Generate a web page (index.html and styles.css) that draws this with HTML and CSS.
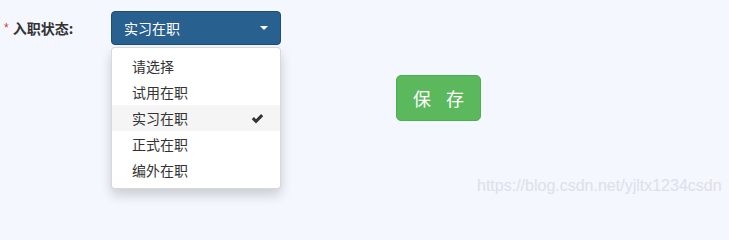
FILE: index.html
```html
<!DOCTYPE html>
<html lang="zh-CN">
<head>
<meta charset="utf-8">
<title>入职状态</title>
<link rel="stylesheet" href="styles.css">
</head>
<body>
<div class="page">
  <div class="form-row">
    <label class="field-label"><span class="req">*</span>入职状态:</label>
    <div class="select">
      <button class="select-btn" type="button">
        <span class="select-text">实习在职</span>
        <span class="caret"></span>
      </button>
      <ul class="menu">
        <li class="item">请选择</li>
        <li class="item">试用在职</li>
        <li class="item active">实习在职
          <svg class="check" viewBox="0 0 13 10" width="13" height="10"><path d="M0.8 5.2 L2.9 3.1 L5 5.2 L10.1 0.1 L12.2 2.2 L5 9.4 Z" fill="#333"/></svg>
        </li>
        <li class="item">正式在职</li>
        <li class="item">编外在职</li>
      </ul>
    </div>
    <button class="save-btn" type="button"><span>保</span><span>存</span></button>
  </div>
  <div class="watermark">https://blog.csdn.net/yjltx1234csdn</div>
</div>
</body>
</html>
```

FILE: styles.css
```css
* { box-sizing: border-box; }
html, body {
  margin: 0;
  padding: 0;
  background: #f4f7fd;
  font-family: "Noto Sans CJK SC", "Noto Sans", sans-serif;
  color: #333;
}
.page {
  position: relative;
  width: 729px;
  height: 208px;
  overflow: hidden;
}
.form-row {
  display: flex;
  align-items: flex-start;
  padding-top: 11px;
}
.field-label {
  display: flex;
  align-items: center;
  width: 111px;
  height: 34px;
  padding-left: 4px;
  font-size: 14px;
  font-weight: bold;
  color: #333;
}
.req {
  color: #e4322b;
  font-weight: normal;
  font-size: 12px;
  margin-right: 4px;
  font-family: "Liberation Sans", sans-serif;
}
.select {
  position: relative;
  width: 170px;
}
.select-btn {
  display: flex;
  align-items: center;
  justify-content: space-between;
  width: 170px;
  height: 34px;
  padding: 0 12px;
  background: #286090;
  border: 1px solid #204d74;
  border-radius: 4px;
  color: #fff;
  font-family: inherit;
  font-size: 14px;
  line-height: 20px;
  cursor: pointer;
}
.caret {
  width: 0;
  height: 0;
  border-top: 4px solid #fff;
  border-left: 4px solid transparent;
  border-right: 4px solid transparent;
}
.menu {
  position: absolute;
  top: 36px;
  left: 0;
  width: 170px;
  margin: 0;
  padding: 5px 0;
  list-style: none;
  background: #fff;
  border: 1px solid rgba(0, 0, 0, 0.15);
  border-radius: 4px;
  box-shadow: 0 6px 12px rgba(0, 0, 0, 0.175);
}
.item {
  position: relative;
  padding: 3px 20px;
  font-size: 14px;
  line-height: 20px;
  color: #333;
}
.item.active {
  background: #f5f5f5;
}
.check {
  position: absolute;
  right: 16px;
  top: 9px;
}
.save-btn {
  display: flex;
  gap: 15px;
  margin-left: 115px;
  margin-top: 64px;
  height: 46px;
  padding: 0 16px;
  align-items: center;
  background: #5cb85c;
  border: 1px solid #4cae4c;
  border-radius: 5px;
  color: #fff;
  font-family: inherit;
  font-size: 18px;
  line-height: 24px;
  cursor: pointer;
}
.watermark {
  position: absolute;
  left: 477px;
  top: 177px;
  font-family: "Liberation Sans", sans-serif;
  font-size: 16px;
  color: #dde0e8;
}
```
